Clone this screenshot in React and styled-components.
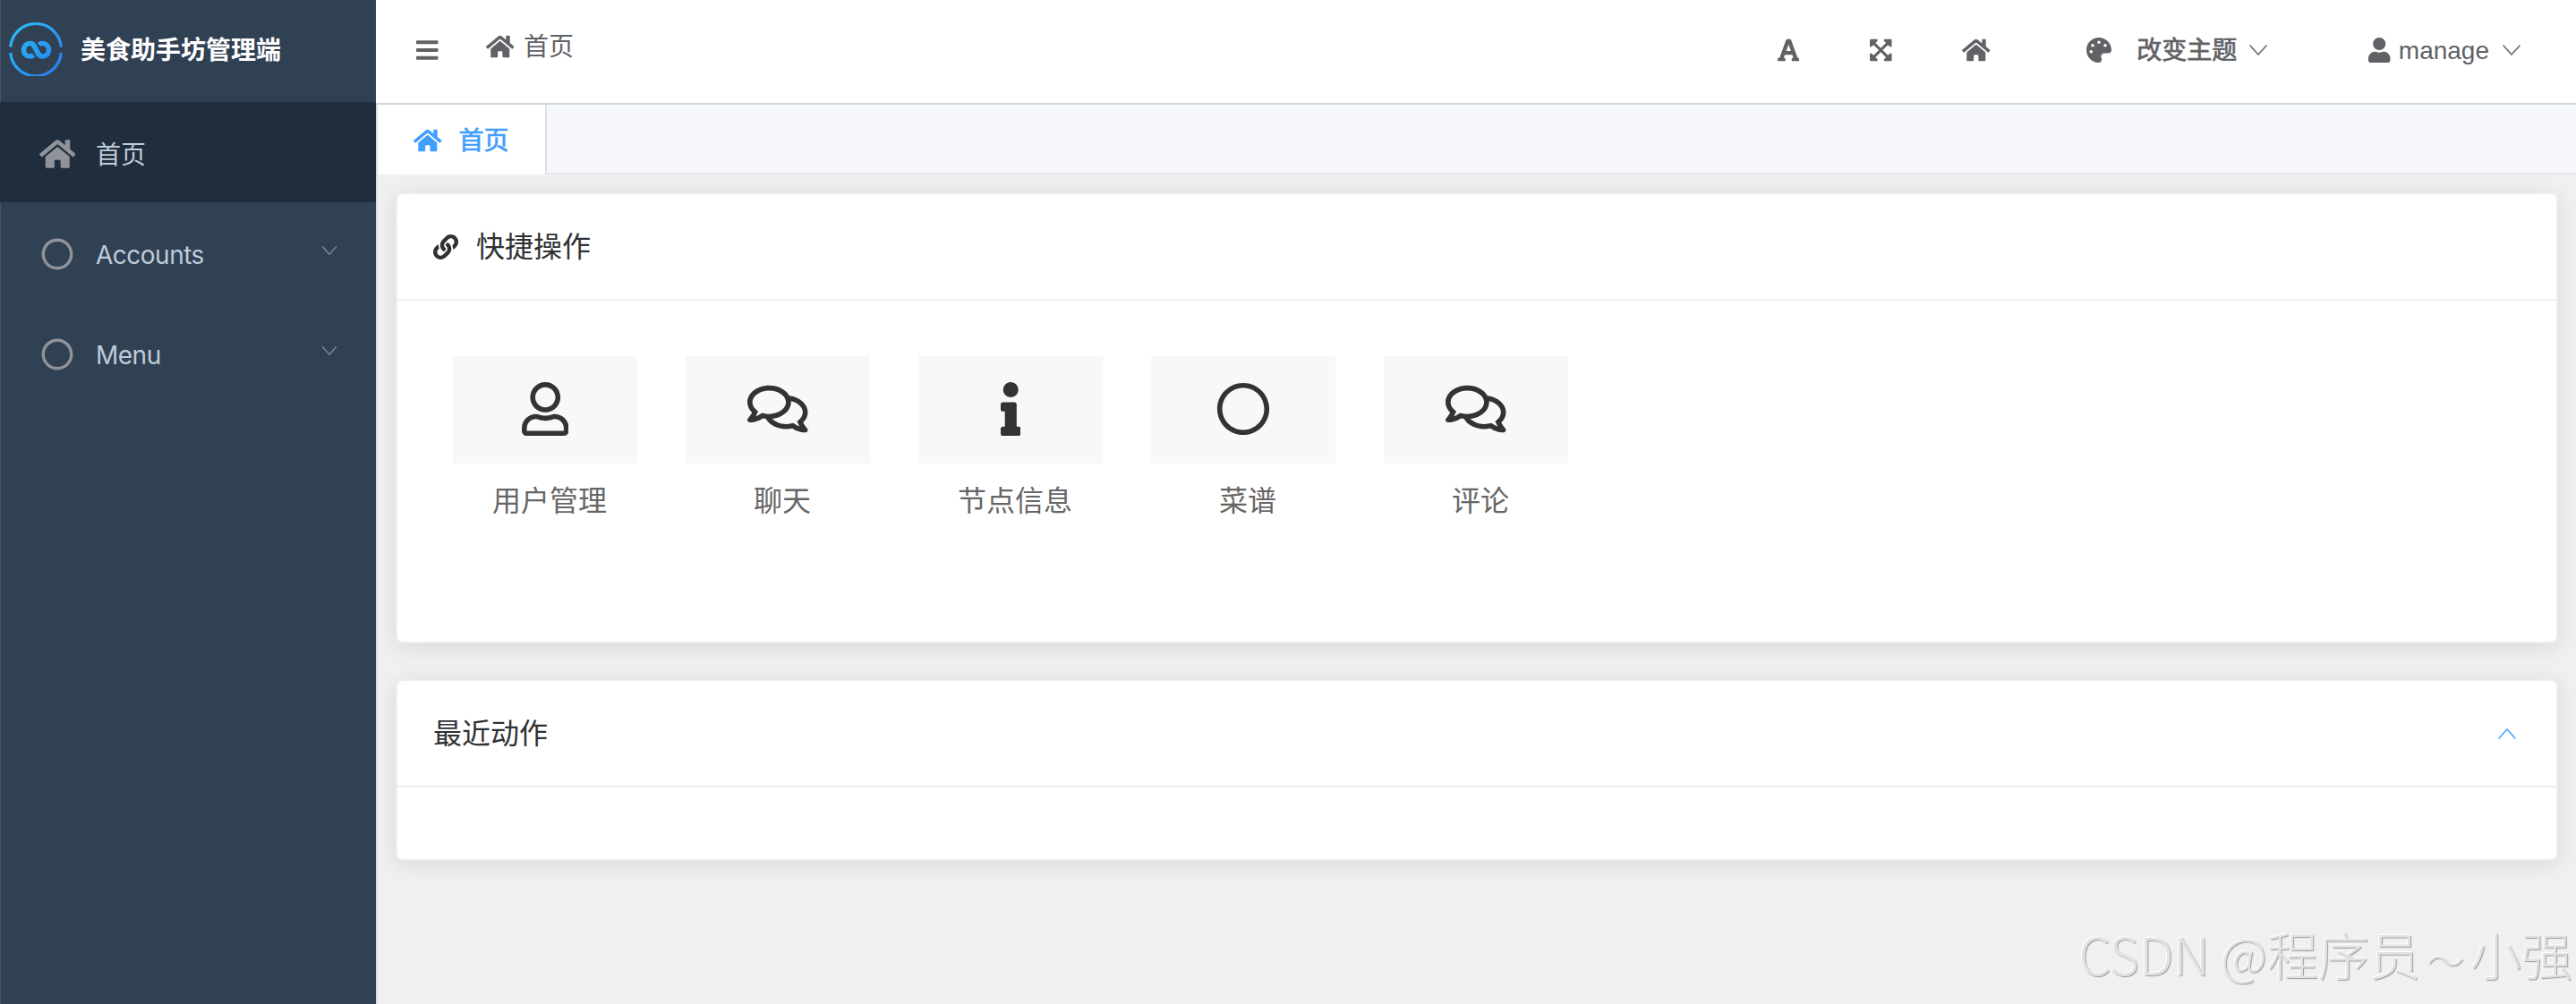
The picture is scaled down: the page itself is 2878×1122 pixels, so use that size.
import React from 'react';
import styled, { createGlobalStyle } from 'styled-components';
import {
  FaBars,
  FaExpandArrowsAlt,
  FaFont,
  FaHome,
  FaInfo,
  FaLink,
  FaPalette,
  FaRegCircle,
  FaRegComments,
  FaRegUser,
  FaUser,
} from 'react-icons/fa';

const Colors = {
  SIDEBAR: '#314154',
  SIDEBAR_ACTIVE: '#202d3c',
  SIDEBAR_TEXT: '#bfcbd9',
  ICON_GRAY: '#909399',
  TEXT: '#606266',
  TITLE: '#303133',
  PRIMARY: '#409eff',
  BORDER: '#dcdfe6',
  CARD_BORDER: '#ebeef5',
  PAGE: '#f0f0f0',
};

const GlobalStyle = createGlobalStyle`
  * {
    box-sizing: border-box;
  }

  body {
    margin: 0;
    font-family: 'Liberation Sans', 'Noto Sans CJK SC', sans-serif;
    font-size: 28px;
    color: ${Colors.TEXT};
    background-color: ${Colors.PAGE};
  }
`;

const Layout = styled.div`
  display: flex;
  width: 100%;
  height: 1122px;
  overflow: hidden;
`;

const Sidebar = styled.aside`
  width: 420px;
  flex-shrink: 0;
  background-color: ${Colors.SIDEBAR};
  box-shadow: inset 1px 0 0 #42536a;
`;

const Brand = styled.div`
  height: 114px;
  display: flex;
  align-items: center;
  gap: 20px;
  padding: 0 0 4px 10px;
  color: #fff;
  font-weight: 700;
  line-height: 40px;

  .title {
    padding-top: 3px;
  }
`;

const MenuItem = styled.div`
  height: 112px;
  display: flex;
  align-items: center;
  padding: 3px 42px 0;
  color: ${Colors.SIDEBAR_TEXT};
  background-color: ${({ $active }) => ($active ? Colors.SIDEBAR_ACTIVE : 'transparent')};
`;

const MenuIcon = styled.span`
  width: 44px;
  margin-right: 21px;
  display: flex;
  justify-content: center;
  color: ${Colors.ICON_GRAY};
`;

const MenuLabel = styled.span`
  flex: 1;
  font-family: 'Inter', 'Noto Sans CJK SC', sans-serif;
  letter-spacing: ${({ $spacing }) => $spacing || 0};
  line-height: 40px;
  padding-top: 3px;
`;

const MenuArrow = styled.span`
  display: flex;
  padding: 0 0 8px;
  margin-right: 1px;
  color: ${Colors.ICON_GRAY};
`;

const Main = styled.main`
  flex: 1;
  min-width: 0;
`;

const TopBar = styled.header`
  height: 117px;
  display: flex;
  align-items: center;
  justify-content: space-between;
  padding: 0 62px 4px 45px;
  background-color: #fff;
  border-bottom: 2px solid #d0d4e0;
`;

const LeftArea = styled.div`
  display: flex;
  align-items: center;
`;

const Breadcrumb = styled.div`
  display: flex;
  align-items: center;
  gap: 11px;
  margin-left: 53px;
  padding-bottom: 7px;
  line-height: 40px;

  .label {
    padding-top: 2px;
  }
`;

const RightArea = styled.div`
  display: flex;
  align-items: center;
`;

const ToolButton = styled.div`
  display: flex;
  align-items: center;
  margin-right: ${({ $gap }) => $gap}px;
`;

const Dropdown = styled.div`
  display: flex;
  align-items: center;
  margin-right: ${({ $gap }) => $gap || 0}px;
  line-height: 40px;

  .label {
    margin: 0 ${({ $arrowGap }) => $arrowGap}px 0 ${({ $labelGap }) => $labelGap}px;
    padding-top: ${({ $drop }) => $drop}px;
    -webkit-text-stroke: ${({ $medium }) => ($medium ? '0.7px' : 0)};
  }
`;

const Content = styled.div`
  border-left: 2px solid ${Colors.BORDER};
  height: 1005px;
`;

const TabBar = styled.nav`
  height: 78px;
  display: flex;
  background-color: #f5f7fb;
`;

const Tab = styled.div`
  width: 189px;
  display: flex;
  align-items: center;
  gap: 19px;
  padding: 2px 0 0 40px;
  color: ${Colors.PRIMARY};
  background-color: #fff;
  border-right: 2px solid ${Colors.BORDER};
  line-height: 40px;

  .label {
    padding-top: 1px;
    -webkit-text-stroke: 0.7px;
  }
`;

const TabRest = styled.div`
  flex: 1;
  border-bottom: 2px solid #e4e7ed;
`;

const Cards = styled.div`
  display: flex;
  flex-direction: column;
  gap: 40px;
  padding: 20px;
`;

const Card = styled.section`
  height: ${({ $height }) => $height}px;
  background-color: #fff;
  border: 2px solid ${Colors.CARD_BORDER};
  border-radius: 8px;
  box-shadow: 0 4px 24px rgba(0, 0, 0, 0.1);
`;

const CardHeader = styled.div`
  height: 119px;
  display: flex;
  align-items: center;
  padding: 0 45px 0 40px;
  border-bottom: 2px solid ${Colors.CARD_BORDER};
  color: ${Colors.TITLE};
  font-size: 32px;
  line-height: 44px;
`;

const CardTitle = styled.span`
  flex: 1;
  margin-left: ${({ $indent }) => $indent || 0}px;
`;

const CardToggle = styled.span`
  display: flex;
  color: ${Colors.PRIMARY};
`;

const QuickList = styled.div`
  display: flex;
  gap: 54px;
  padding: 62px;
`;

const QuickItem = styled.div`
  width: 206px;
`;

const QuickIcon = styled.div`
  height: 120px;
  display: flex;
  align-items: center;
  justify-content: center;
  padding-bottom: 2px;
  background-color: #f8f8f8;
  color: #333;
`;

const QuickLabel = styled.div`
  margin-top: 20px;
  padding-left: 10px;
  text-align: center;
  color: #666;
  font-size: 32px;
  line-height: 44px;
`;

const Watermark = styled.div`
  position: absolute;
  right: 4px;
  bottom: 12px;
  color: #e2e2e2;
  font-family: 'Noto Sans CJK SC', sans-serif;
  font-size: 57px;
  font-weight: 300;
  line-height: 76px;
  white-space: nowrap;
  text-shadow: 1px 1px 1px #9c9c9c, -1px -1px 1px #fff;

  .wave {
    margin: 0 7px;
    font-size: 42px;
  }
`;

// font awesome glyphs keep their own width, only the height follows the font size
const Glyph = ({ icon: Icon, ratio = 1, size = 28 }) => (
  <Icon style={{ width: size * ratio, height: size, display: 'block' }} />
);

const Chevron = ({ up, width = 20, height = 12, stroke = 1.5 }) => (
  <svg width={width} height={height} viewBox="0 0 20 12" fill="none">
    <path
      d={up ? 'M1 11L10 1L19 11' : 'M1 1L10 11L19 1'}
      stroke="currentColor"
      strokeWidth={stroke}
      strokeLinecap="round"
      strokeLinejoin="round"
    />
  </svg>
);

const Logo = () => (
  <svg width="60" height="60" viewBox="0 0 60 60" fill="none">
    <defs>
      <linearGradient id="logo" x1="8" y1="8" x2="52" y2="52" gradientUnits="userSpaceOnUse">
        <stop offset="0" stopColor="#2cb8f5" />
        <stop offset="1" stopColor="#2683f0" />
      </linearGradient>
    </defs>
    <g stroke="url(#logo)">
      <path d="M1.7 27.5A28.4 28.4 0 0 1 58.3 27.500" strokeWidth="3.2" />
      <path d="M1.7 34A28.4 28.4 0 0 0 58.3 34" strokeWidth="3.2" />
      <path
        d="M27.5 36.4C26.400 37.500 25 38 23.500 38C19.500 38 16.500 34.700 16.500 30.800C16.500 26.800 19.500 23.500 23.500 23.500C31 23.500 30 38 37.500 38C41.500 38 44.500 34.800 44.500 30.800C44.500 26.800 41.500 23.500 37.500 23.500C36 23.500 34.600 24 33.500 25"
        strokeWidth="5.6"
      />
    </g>
  </svg>
);

const menus = [
  { label: '首页', icon: FaHome, ratio: 1.125, active: true },
  { label: 'Accounts', icon: FaRegCircle, arrow: true },
  { label: 'Menu', icon: FaRegCircle, arrow: true },
];

const actions = [
  { label: '用户管理', icon: FaRegUser, ratio: 0.875 },
  { label: '聊天', icon: FaRegComments, ratio: 1.125 },
  { label: '节点信息', icon: FaInfo, ratio: 0.375 },
  { label: '菜谱', icon: FaRegCircle, ratio: 1 },
  { label: '评论', icon: FaRegComments, ratio: 1.125 },
];

const App = () => {
  return (
    <>
      <GlobalStyle />
      <Layout>
        <Sidebar>
          <Brand>
            <Logo />
            <span className="title">美食助手坊管理端</span>
          </Brand>
          {menus.map(({ label, icon, ratio, active, arrow }) => (
            <MenuItem key={label} $active={active}>
              <MenuIcon>
                <Glyph icon={icon} ratio={ratio} size={36} />
              </MenuIcon>
              <MenuLabel $spacing={arrow ? '-0.5px' : 0}>{label}</MenuLabel>
              {arrow && (
                <MenuArrow>
                  <Chevron width={18} height={10} />
                </MenuArrow>
              )}
            </MenuItem>
          ))}
        </Sidebar>
        <Main>
          <TopBar>
            <LeftArea>
              <Glyph icon={FaBars} ratio={0.875} />
              <Breadcrumb>
                <Glyph icon={FaHome} ratio={1.125} />
                <span className="label">首页</span>
              </Breadcrumb>
            </LeftArea>
            <RightArea>
              <ToolButton $gap={79}>
                <Glyph icon={FaFont} ratio={0.875} />
              </ToolButton>
              <ToolButton $gap={78}>
                <Glyph icon={FaExpandArrowsAlt} ratio={0.875} />
              </ToolButton>
              <ToolButton $gap={108}>
                <Glyph icon={FaHome} ratio={1.125} />
              </ToolButton>
              <Dropdown $gap={113} $labelGap={28} $arrowGap={14} $drop={3} $medium>
                <Glyph icon={FaPalette} />
                <span className="label">改变主题</span>
                <Chevron />
              </Dropdown>
              <Dropdown $labelGap={9} $arrowGap={15} $drop={2}>
                <Glyph icon={FaUser} ratio={0.875} />
                <span className="label">manage</span>
                <Chevron />
              </Dropdown>
            </RightArea>
          </TopBar>
          <Content>
            <TabBar>
              <Tab>
                <Glyph icon={FaHome} ratio={1.125} />
                <span className="label">首页</span>
              </Tab>
              <TabRest />
            </TabBar>
            <Cards>
              <Card $height={504}>
                <CardHeader>
                  <Glyph icon={FaLink} />
                  <CardTitle $indent={20}>快捷操作</CardTitle>
                </CardHeader>
                <QuickList>
                  {actions.map(({ label, icon, ratio }) => (
                    <QuickItem key={label}>
                      <QuickIcon>
                        <Glyph icon={icon} ratio={ratio} size={60} />
                      </QuickIcon>
                      <QuickLabel>{label}</QuickLabel>
                    </QuickItem>
                  ))}
                </QuickList>
              </Card>
              <Card $height={203}>
                <CardHeader>
                  <CardTitle>最近动作</CardTitle>
                  <CardToggle>
                    <Chevron up />
                  </CardToggle>
                </CardHeader>
              </Card>
            </Cards>
          </Content>
        </Main>
        <Watermark>
          CSDN @程序员<span className="wave">～</span>小强
        </Watermark>
      </Layout>
    </>
  );
};

export default App;
